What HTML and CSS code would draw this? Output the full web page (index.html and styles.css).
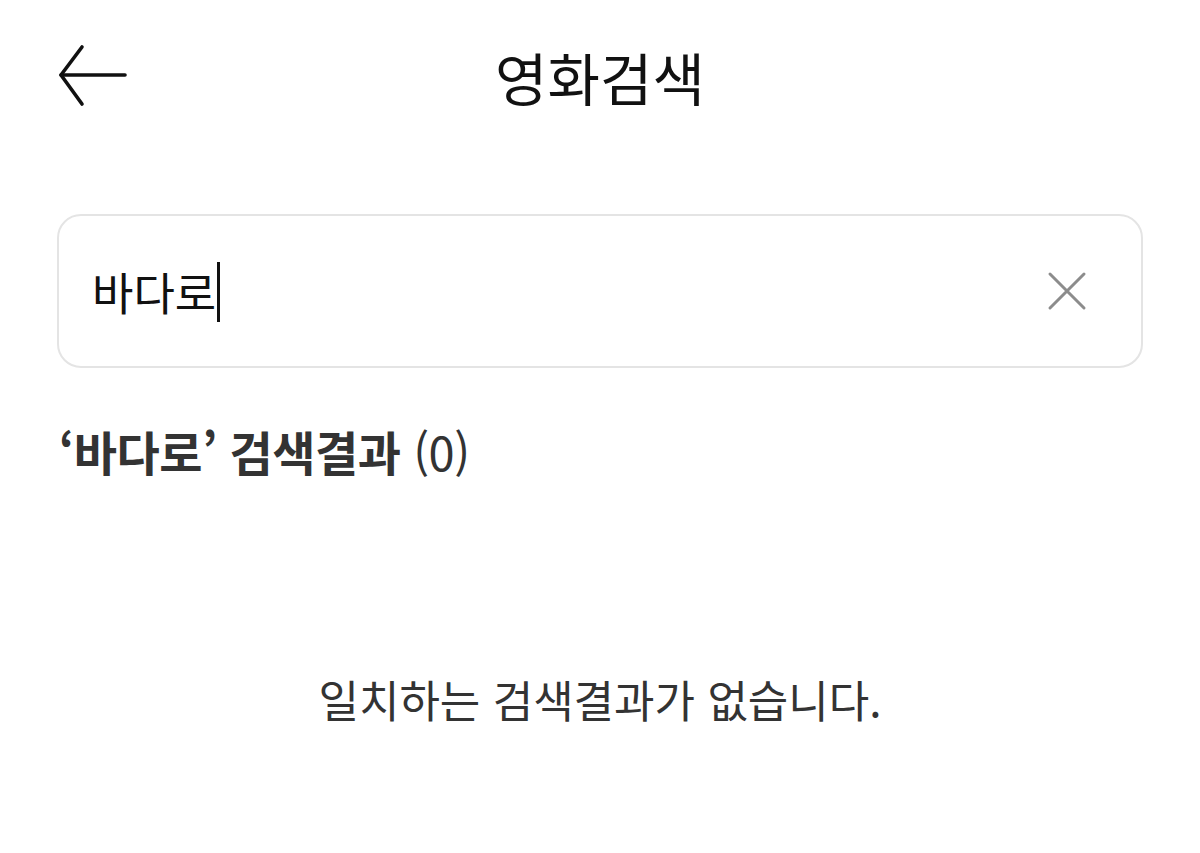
FILE: index.html
```html
<!DOCTYPE html>
<html lang="ko">
<head>
<meta charset="utf-8">
<title>영화검색</title>
<link rel="stylesheet" href="styles.css">
</head>
<body>
<div class="page">
  <header class="topbar">
    <button class="back" aria-label="뒤로">
      <svg width="70" height="64" viewBox="0 0 70 64" fill="none" stroke="#111" stroke-width="3.6" stroke-linecap="round" stroke-linejoin="round">
        <path d="M67 31H3"/>
        <path d="M24 3L3 31l21 29"/>
      </svg>
    </button>
    <h1 class="title">영화검색</h1>
  </header>

  <div class="search">
    <span class="query">바다로<span class="caret"></span></span>
    <button class="clear" aria-label="지우기">
      <svg width="40" height="40" viewBox="0 0 40 40" fill="none" stroke="#8c8c8c" stroke-width="3" stroke-linecap="round">
        <path d="M3 3l34 34M37 3L3 37"/>
      </svg>
    </button>
  </div>

  <h2 class="result-head"><strong>‘바다로’ 검색결과</strong> <span class="count">(0)</span></h2>

  <p class="empty">일치하는 검색결과가 없습니다.</p>
</div>
</body>
</html>
```

FILE: styles.css
```css
html, body {
  margin: 0;
  padding: 0;
  background: #fff;
}

body {
  font-family: "Noto Sans CJK KR", "Noto Sans", sans-serif;
  color: #333;
}

.page {
  padding: 0 57px;
}

.topbar {
  position: relative;
  height: 154px;
  display: flex;
  align-items: center;
  justify-content: center;
}

.back {
  position: absolute;
  left: 1px;
  top: 44px;
  padding: 0;
  border: 0;
  background: none;
  display: flex;
}

.title {
  margin: 0;
  font-size: 57px;
  font-weight: 400;
  color: #111;
  line-height: 1;
  transform: translateY(-1px);
}

.search {
  margin-top: 60px;
  height: 150px;
  border: 2px solid #e4e4e4;
  border-radius: 24px;
  display: flex;
  align-items: center;
  justify-content: space-between;
  padding: 0 54px 0 33px;
}

.query {
  font-size: 45px;
  color: #111;
  display: flex;
  align-items: center;
  line-height: 1;
}

.caret {
  display: inline-block;
  width: 3px;
  height: 60px;
  background: #111;
  transform: translate(1px, 1px);
}

.clear {
  padding: 0;
  border: 0;
  background: none;
  display: flex;
}

.result-head {
  margin: 55px 0 0 2px;
  font-size: 47px;
  line-height: 1.2;
  font-weight: 400;
  color: #333;
  letter-spacing: -0.5px;
}

.result-head strong {
  font-weight: 700;
}

.count {
  font-weight: 400;
  color: #333;
}

.empty {
  margin: 194px 0 0;
  text-align: center;
  font-size: 44px;
  line-height: 1.2;
  color: #333;
}
```
